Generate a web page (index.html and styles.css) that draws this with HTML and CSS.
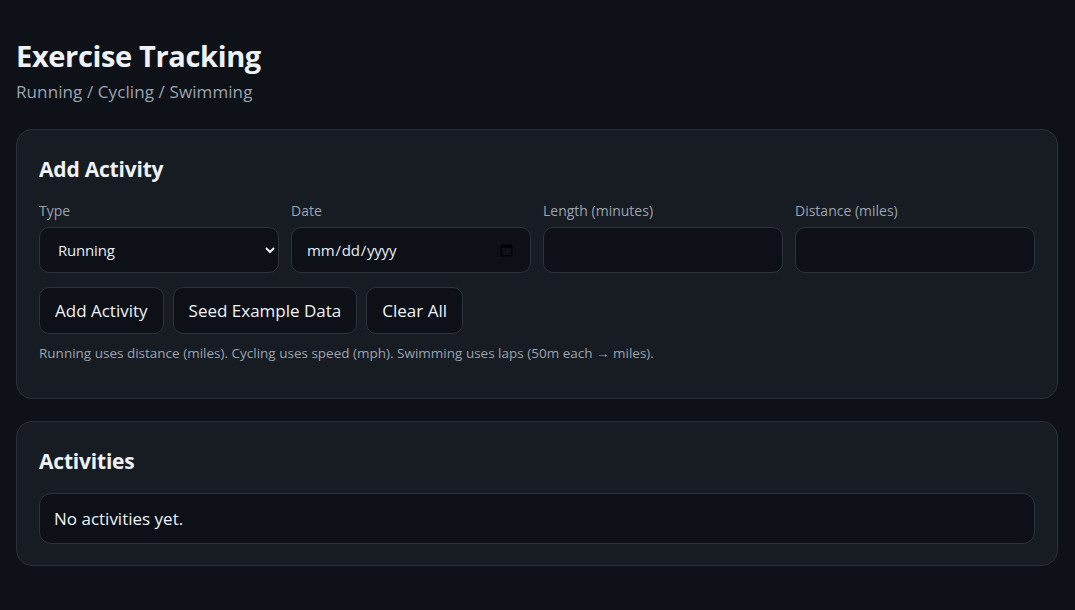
FILE: index.html
```html
<!DOCTYPE html>
<html lang="en">
<head>
<meta charset="utf-8">
<title>Exercise Tracking</title>
<link rel="stylesheet" href="styles.css">
</head>
<body>
<main class="page">
  <header class="header">
    <h1 class="title">Exercise Tracking</h1>
    <p class="subtitle">Running / Cycling / Swimming</p>
  </header>

  <section class="card">
    <h2 class="card-title">Add Activity</h2>
    <div class="fields">
      <label class="field">
        <span class="label">Type</span>
        <select class="control">
          <option>Running</option>
          <option>Cycling</option>
          <option>Swimming</option>
        </select>
      </label>
      <label class="field">
        <span class="label">Date</span>
        <input class="control" type="date">
      </label>
      <label class="field">
        <span class="label">Length (minutes)</span>
        <input class="control" type="number">
      </label>
      <label class="field">
        <span class="label">Distance (miles)</span>
        <input class="control" type="number">
      </label>
    </div>
    <div class="actions">
      <button class="btn">Add Activity</button>
      <button class="btn">Seed Example Data</button>
      <button class="btn">Clear All</button>
    </div>
    <p class="hint">Running uses distance (miles). Cycling uses speed (mph). Swimming uses laps (50m each → miles).</p>
  </section>

  <section class="card">
    <h2 class="card-title">Activities</h2>
    <div class="empty">No activities yet.</div>
  </section>
</main>
</body>
</html>
```

FILE: styles.css
```css
* { box-sizing: border-box; }
html, body {
  margin: 0;
  background: #0e1117;
  color: #e6edf3;
  font-family: "Open Sans", "Noto Sans", sans-serif;
}
.page {
  padding: 36px 17px 40px 16px;
  display: flex;
  flex-direction: column;
  gap: 22px;
}
.header { display: flex; flex-direction: column; gap: 4px; margin-bottom: 3px; }
.title {
  margin: 0;
  font-size: 29px;
  font-weight: 700;
  line-height: 40px;
  letter-spacing: -0.35px;
  color: #eef2f6;
}
.subtitle {
  margin: 0;
  font-size: 17px;
  line-height: 24px;
  color: #9aa4b0;
  letter-spacing: 0.1px;
}
.card {
  background: #171b22;
  border: 1px solid #2b313a;
  border-radius: 16px;
  padding: 23px 22px 35px;
}
.card + .card { padding-bottom: 21px; }
.card-title {
  margin: 0 0 16px;
  font-size: 21px;
  font-weight: 700;
  line-height: 32px;
  letter-spacing: -0.2px;
  color: #eef2f6;
}
.fields {
  display: grid;
  grid-template-columns: repeat(4, 1fr);
  gap: 12px;
  margin-top: 1px;
}
.field { display: flex; flex-direction: column; gap: 6px; }
.label {
  font-size: 14px;
  line-height: 20px;
  color: #9aa4b0;
}
.control {
  height: 46px;
  width: 100%;
  background: #0d1017;
  color: #e6edf3;
  border: 1px solid #2d333c;
  border-radius: 10px;
  padding: 0 14px;
  font-family: inherit;
  font-size: 15px;
  letter-spacing: -0.2px;
  outline: none;
}
select.control { padding-right: 10px; }
.actions {
  display: flex;
  gap: 9px;
  margin-top: 14px;
}
.btn {
  height: 47px;
  padding: 0 15px;
  background: #0d1017;
  color: #eef2f6;
  border: 1px solid #2d333c;
  border-radius: 10px;
  font-family: inherit;
  font-size: 17px;
  letter-spacing: 0;
  cursor: pointer;
}
.hint {
  margin: 9px 0 0;
  font-size: 13.5px;
  line-height: 20px;
  color: #9aa4b0;
}
.empty {
  height: 51px;
  display: flex;
  align-items: center;
  padding: 0 14px;
  background: #0d1017;
  border: 1px solid #2d333c;
  border-radius: 12px;
  font-size: 17px;
  color: #eef2f6;
}
```
